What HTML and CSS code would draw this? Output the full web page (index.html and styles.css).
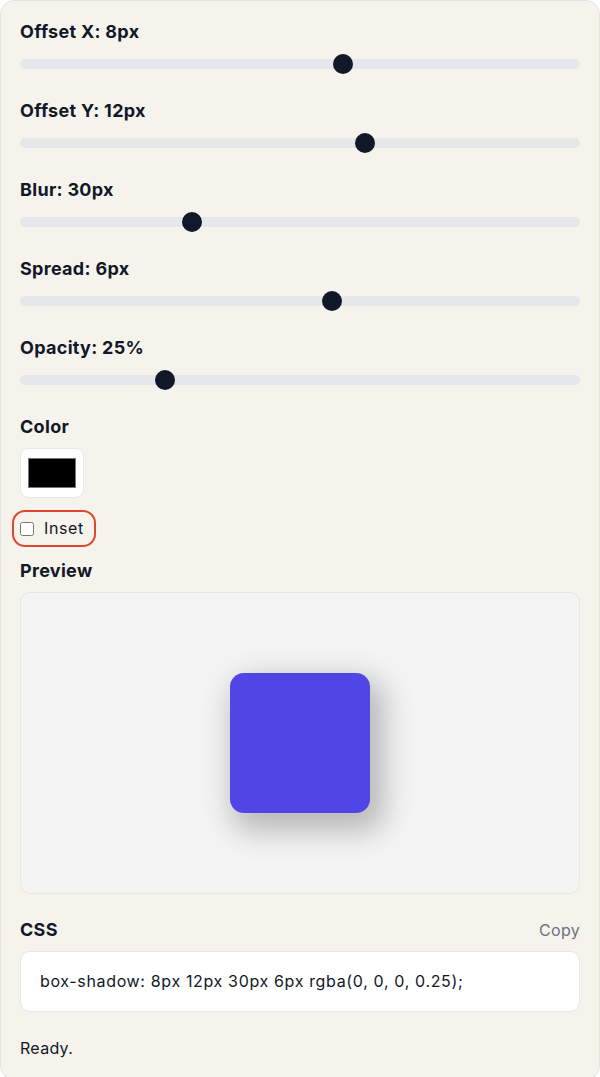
FILE: index.html
```html
<!DOCTYPE html>
<html lang="en">
<head>
<meta charset="utf-8">
<title>Box Shadow Generator</title>
<link rel="stylesheet" href="styles.css">
</head>
<body>
<main class="card">
  <div class="field">
    <label class="label" for="ox">Offset X: 8px</label>
    <input class="range" id="ox" type="range" min="-50" max="50" value="8">
  </div>
  <div class="field">
    <label class="label" for="oy">Offset Y: 12px</label>
    <input class="range" id="oy" type="range" min="-50" max="50" value="12">
  </div>
  <div class="field">
    <label class="label" for="blur">Blur: 30px</label>
    <input class="range" id="blur" type="range" min="0" max="100" value="30">
  </div>
  <div class="field">
    <label class="label" for="spread">Spread: 6px</label>
    <input class="range" id="spread" type="range" min="-50" max="50" value="6">
  </div>
  <div class="field">
    <label class="label" for="op">Opacity: 25%</label>
    <input class="range" id="op" type="range" min="0" max="100" value="25">
  </div>
  <div class="field field-color">
    <label class="label" for="col">Color</label>
    <div class="swatch-box"><div class="swatch"></div></div>
  </div>
  <label class="inset"><input type="checkbox" class="check"> Inset</label>
  <div class="field field-preview">
    <div class="label">Preview</div>
    <div class="preview"><div class="box"></div></div>
  </div>
  <div class="field">
    <div class="head-row">
      <div class="label">CSS</div>
      <button class="copy" type="button">Copy</button>
    </div>
    <div class="code">box-shadow: 8px 12px 30px 6px rgba(0, 0, 0, 0.25);</div>
  </div>
  <div class="status">Ready.</div>
</main>
</body>
</html>
```

FILE: styles.css
```css
* { box-sizing: border-box; }
html, body { margin: 0; padding: 0; background: #ffffff; }
body {
  font-family: "Inter", "Noto Sans", sans-serif;
  color: #111827;
}
.card {
  width: 600px;
  min-height: 1076px;
  background: #f6f3ed;
  border: 1px solid #e3e3e3;
  border-radius: 14px;
  padding: 19px 19px 20px;
  display: flex;
  flex-direction: column;
}
.field { display: flex; flex-direction: column; gap: 10px; margin-bottom: 25px; }
.label {
  font-size: 18px;
  line-height: 24px;
  font-weight: 700;
  letter-spacing: 0.3px;
}
.range {
  -webkit-appearance: none;
  appearance: none;
  width: 100%;
  height: 20px;
  margin: 0;
  background: transparent;
}
.range::-webkit-slider-runnable-track {
  height: 10px;
  background: #e5e7eb;
  border-radius: 5px;
}
.range::-webkit-slider-thumb {
  -webkit-appearance: none;
  width: 20px;
  height: 20px;
  border-radius: 50%;
  background: #111827;
  margin-top: -5px;
}
.swatch-box {
  width: 64px;
  height: 50px;
  background: #ffffff;
  border: 1px solid #e5e7eb;
  border-radius: 8px;
  padding: 9px 7px;
  margin-top: -1px;
}
.swatch { width: 100%; height: 100%; background: #000; border: 1px solid #767676; }
.field-color { margin-bottom: 12px; }
.inset {
  align-self: flex-start;
  display: inline-flex;
  align-items: center;
  gap: 10px;
  margin-left: -8px;
  padding: 6px 10px 6px 6px;
  border: 2px solid #e0452f;
  border-radius: 13px;
  font-size: 16px;
  line-height: 21px;
  letter-spacing: 0.6px;
  margin-bottom: 12px;
}
.check { width: 14px; height: 14px; margin: 0; }
.preview {
  height: 302px;
  margin-top: -1px;
  background: #f4f4f4;
  border: 1px solid #e5e7eb;
  border-radius: 10px;
  display: flex;
  align-items: center;
  justify-content: center;
}
.box {
  width: 140px;
  height: 140px;
  background: #4f46e5;
  border-radius: 14px;
  box-shadow: 8px 12px 30px 6px rgba(0, 0, 0, 0.25);
}
.field-preview { margin-bottom: 24px; }
.head-row { display: flex; justify-content: space-between; align-items: center; }
.copy {
  background: none;
  border: none;
  padding: 0;
  font-family: inherit;
  font-size: 16px;
  letter-spacing: 0.3px;
  color: #6b7280;
}
.code {
  background: #ffffff;
  border: 1px solid #e5e7eb;
  border-radius: 10px;
  padding: 18px 19px;
  font-size: 16px;
  line-height: 23px;
  letter-spacing: 0.65px;
  margin-top: -1px;
}
.status { font-size: 16px; line-height: 22px; letter-spacing: 0.3px; }
```
